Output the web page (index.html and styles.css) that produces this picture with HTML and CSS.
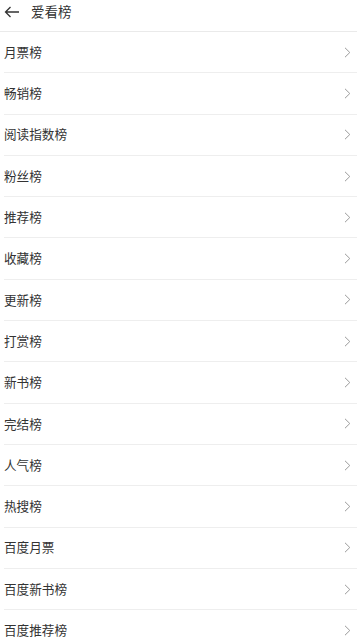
FILE: index.html
```html
<!DOCTYPE html>
<html>
<head>
<meta charset="utf-8">
<link rel="stylesheet" href="styles.css">
</head>
<body>
<div class="header">
  <svg class="back" width="16" height="12" viewBox="0 0 16 12"><path d="M15 6H1.5M6.5 1L1.5 6L6.5 11" fill="none" stroke="#333" stroke-width="1.3"/></svg>
  <span class="title">爱看榜</span>
</div>
<ul class="list">
  <li class="row"><span>月票榜</span><svg class="chev" width="7" height="11" viewBox="0 0 7 11"><path d="M1 0.8L5.8 5.5L1 10.2" fill="none" stroke="#9a9a9a" stroke-width="1"/></svg></li>
  <li class="row"><span>畅销榜</span><svg class="chev" width="7" height="11" viewBox="0 0 7 11"><path d="M1 0.8L5.8 5.5L1 10.2" fill="none" stroke="#9a9a9a" stroke-width="1"/></svg></li>
  <li class="row"><span>阅读指数榜</span><svg class="chev" width="7" height="11" viewBox="0 0 7 11"><path d="M1 0.8L5.8 5.5L1 10.2" fill="none" stroke="#9a9a9a" stroke-width="1"/></svg></li>
  <li class="row"><span>粉丝榜</span><svg class="chev" width="7" height="11" viewBox="0 0 7 11"><path d="M1 0.8L5.8 5.5L1 10.2" fill="none" stroke="#9a9a9a" stroke-width="1"/></svg></li>
  <li class="row"><span>推荐榜</span><svg class="chev" width="7" height="11" viewBox="0 0 7 11"><path d="M1 0.8L5.8 5.5L1 10.2" fill="none" stroke="#9a9a9a" stroke-width="1"/></svg></li>
  <li class="row"><span>收藏榜</span><svg class="chev" width="7" height="11" viewBox="0 0 7 11"><path d="M1 0.8L5.8 5.5L1 10.2" fill="none" stroke="#9a9a9a" stroke-width="1"/></svg></li>
  <li class="row"><span>更新榜</span><svg class="chev" width="7" height="11" viewBox="0 0 7 11"><path d="M1 0.8L5.8 5.5L1 10.2" fill="none" stroke="#9a9a9a" stroke-width="1"/></svg></li>
  <li class="row"><span>打赏榜</span><svg class="chev" width="7" height="11" viewBox="0 0 7 11"><path d="M1 0.8L5.8 5.5L1 10.2" fill="none" stroke="#9a9a9a" stroke-width="1"/></svg></li>
  <li class="row"><span>新书榜</span><svg class="chev" width="7" height="11" viewBox="0 0 7 11"><path d="M1 0.8L5.8 5.5L1 10.2" fill="none" stroke="#9a9a9a" stroke-width="1"/></svg></li>
  <li class="row"><span>完结榜</span><svg class="chev" width="7" height="11" viewBox="0 0 7 11"><path d="M1 0.8L5.8 5.5L1 10.2" fill="none" stroke="#9a9a9a" stroke-width="1"/></svg></li>
  <li class="row"><span>人气榜</span><svg class="chev" width="7" height="11" viewBox="0 0 7 11"><path d="M1 0.8L5.8 5.5L1 10.2" fill="none" stroke="#9a9a9a" stroke-width="1"/></svg></li>
  <li class="row"><span>热搜榜</span><svg class="chev" width="7" height="11" viewBox="0 0 7 11"><path d="M1 0.8L5.8 5.5L1 10.2" fill="none" stroke="#9a9a9a" stroke-width="1"/></svg></li>
  <li class="row"><span>百度月票</span><svg class="chev" width="7" height="11" viewBox="0 0 7 11"><path d="M1 0.8L5.8 5.5L1 10.2" fill="none" stroke="#9a9a9a" stroke-width="1"/></svg></li>
  <li class="row"><span>百度新书榜</span><svg class="chev" width="7" height="11" viewBox="0 0 7 11"><path d="M1 0.8L5.8 5.5L1 10.2" fill="none" stroke="#9a9a9a" stroke-width="1"/></svg></li>
  <li class="row"><span>百度推荐榜</span><svg class="chev" width="7" height="11" viewBox="0 0 7 11"><path d="M1 0.8L5.8 5.5L1 10.2" fill="none" stroke="#9a9a9a" stroke-width="1"/></svg></li>
</ul>
</body>
</html>
```
FILE: styles.css
```css
html, body {
  margin: 0;
  padding: 0;
  background: #fff;
}
body {
  font-family: "Noto Sans CJK SC", "Noto Sans", sans-serif;
  color: #333;
  overflow: hidden;
}
.header {
  height: 32px;
  box-sizing: border-box;
  border-bottom: 1px solid #eaeaea;
  display: flex;
  align-items: center;
  padding-left: 4px;
}
.back {
  display: block;
  margin-top: -8px;
}
.title {
  font-size: 13.5px;
  margin-left: 11px;
  line-height: 1;
  margin-top: -8px;
}
.list {
  list-style: none;
  margin: 0;
  padding: 0 0 0 4px;
}
.row {
  height: 41.3px;
  box-sizing: border-box;
  border-bottom: 1px solid #eeeeee;
  display: flex;
  align-items: center;
  justify-content: space-between;
  padding-right: 6px;
  font-size: 12.6px;
}
.row span {
  line-height: 1;
}
.chev {
  display: block;
}
```
